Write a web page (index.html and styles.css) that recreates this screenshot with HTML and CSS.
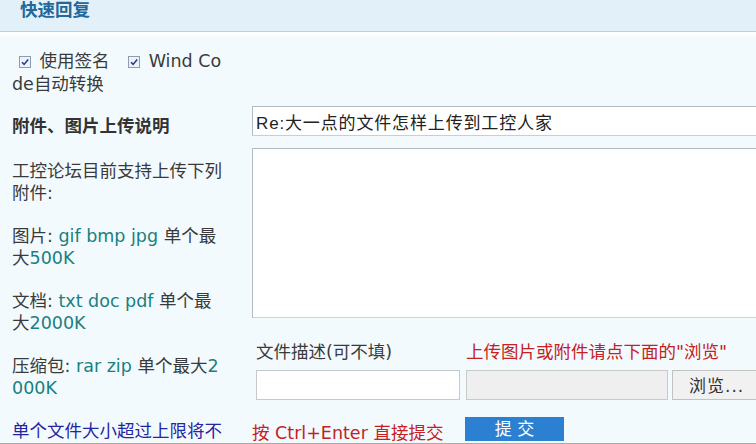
FILE: index.html
```html
<!DOCTYPE html>
<html lang="zh-CN">

<head>
  <meta charset="UTF-8">
  <meta name="viewport" content="width=device-width, initial-scale=1.0">
  <title>快速回复</title>
  <link rel="stylesheet" href="styles.css">
</head>

<body>
  <div class="reply-box">
    <div class="reply-head">快速回复</div>

    <div class="reply-body">
      <!-- Left: options and upload notes -->
      <div class="reply-side">
        <div class="options">
          <label class="opt"><span class="check"><svg width="12" height="12" viewBox="0 0 12 12"><rect x="0.5" y="0.5" width="11" height="11" fill="#eef1f6" stroke="#8e9cb2"/><path d="M3 6.2l2.1 2.2L9.2 3.4" fill="none" stroke="#2b3d92" stroke-width="1.6"/></svg></span> 使用签名</label>
          <label class="opt"><span class="check"><svg width="12" height="12" viewBox="0 0 12 12"><rect x="0.5" y="0.5" width="11" height="11" fill="#eef1f6" stroke="#8e9cb2"/><path d="M3 6.2l2.1 2.2L9.2 3.4" fill="none" stroke="#2b3d92" stroke-width="1.6"/></svg></span> Wind Code自动转换</label>
        </div>

        <h4>附件、图片上传说明</h4>
        <p>工控论坛目前支持上传下列附件:</p>
        <p>图片: <span class="ext">gif bmp jpg</span> 单个最大<span class="ext">500K</span></p>
        <p>文档: <span class="ext">txt doc pdf</span> 单个最大<span class="ext">2000K</span></p>
        <p>压缩包: <span class="ext">rar zip</span> 单个最大<span class="ext">2000K</span></p>
        <p class="notice">单个文件大小超过上限将不</p>
      </div>

      <!-- Right: the form -->
      <form class="reply-main">
        <input class="subject" type="text" name="subject" value="Re:大一点的文件怎样上传到工控人家">
        <textarea class="content" name="content"></textarea>

        <div class="upload-labels">
          <span class="desc-label">文件描述(可不填)</span>
          <span class="hint">上传图片或附件请点下面的"浏览"</span>
        </div>
        <div class="upload-fields">
          <input class="desc" type="text" name="desc">
          <span class="file-path"></span>
          <button type="button" class="browse">浏览...</button>
        </div>

        <div class="submit-row">
          <span class="hint submit-hint">按 Ctrl+Enter 直接提交</span>
          <button type="submit" class="submit">提 交</button>
        </div>
      </form>
    </div>
  </div>
</body>

</html>
```

FILE: styles.css
```css
html,
body {
  margin: 0;
  padding: 0;
  overflow: hidden;
}

body {
  font-family: "DejaVu Sans", "Noto Sans CJK SC", sans-serif;
  font-size: 17.5px;
  color: #3a3a3a;
  background-color: #f3fafe;
}

.reply-box {
  width: 800px;
  height: 444px;
  box-sizing: border-box;
  border-bottom: 1px solid #a9a9a9;
  overflow: hidden;
}

.reply-head {
  height: 31px;
  padding-left: 20px;
  line-height: 20px;
  font-weight: bold;
  color: #22689a;
  background-color: #e1f0f9;
  border-bottom: 1px solid #b8d2e2;
}

.reply-body {
  display: grid;
  grid-template-columns: 240px 1fr;
  column-gap: 12px;
  background: linear-gradient(#ffffff, #f3fafe 6px);
}

/* left column */
.reply-side {
  padding: 18px 0 0 12px;
  width: 217px;
  line-height: 22.5px;
  word-break: break-all;
}

.options {
  margin-bottom: 20px;
}

.opt {
  margin-right: 6px;
}

.check {
  display: inline-block;
  width: 12px;
  height: 12px;
  margin: 0 3px 0 7px;
  vertical-align: -1px;
}

.check svg {
  display: block;
}

.reply-side h4 {
  margin: 0 0 22px;
  font-size: 17.5px;
  color: #333;
}

.reply-side p {
  margin: 0 0 20px;
}

.ext {
  color: #19807f;
}

.notice {
  color: #2525a2;
}

/* right column */
.reply-main {
  padding-top: 74px;
  margin: 0;
}

.subject {
  display: block;
  box-sizing: border-box;
  width: 540px;
  height: 30px;
  margin: 0;
  padding: 0 3px;
  font-family: "Liberation Sans", "Noto Sans CJK SC", sans-serif;
  font-size: 17px;
  letter-spacing: 0.85px;
  color: #222;
  background: #fff;
  border: 1px solid #c8cfd3;
  border-top-color: #b4bcc1;
  border-left-color: #b4bcc1;
}

.content {
  display: block;
  box-sizing: border-box;
  width: 540px;
  height: 170px;
  margin: 12px 0 0;
  background: #fff;
  border: 1px solid #cdd3d6;
  border-top-color: #b4bcc1;
  border-left-color: #b4bcc1;
  resize: none;
}

.upload-labels {
  display: flex;
  margin-top: 23px;
  padding-left: 4px;
  line-height: 22.5px;
}

.desc-label {
  width: 210px;
}

.hint {
  color: #c4211f;
}

.upload-fields {
  display: flex;
  margin-top: 6px;
  padding-left: 4px;
  height: 30px;
}

.desc {
  box-sizing: border-box;
  width: 204px;
  height: 30px;
  margin: 0;
  background: #fff;
  border: 1px solid #c4c9cc;
}

.file-path {
  box-sizing: border-box;
  width: 202px;
  height: 30px;
  margin-left: 6px;
  background: #efefef;
  border: 1px solid #c9c9c9;
}

.browse {
  box-sizing: border-box;
  width: 100px;
  height: 30px;
  margin-left: 4px;
  padding: 0 0 0 16px;
  text-align: left;
  font-family: "DejaVu Sans", "Noto Sans CJK SC", sans-serif;
  font-size: 17px;
  letter-spacing: 1px;
  color: #333;
  background: #f1f1f1;
  border: 1px solid #c2c2c2;
  border-radius: 0;
}

.submit-row {
  display: flex;
  align-items: flex-start;
  margin-top: 17px;
}

.submit-hint {
  width: 213px;
  padding-top: 5px;
  line-height: 22.5px;
}

.submit {
  width: 99px;
  height: 24px;
  padding: 0;
  font-family: "DejaVu Sans", "Noto Sans CJK SC", sans-serif;
  font-size: 17px;
  line-height: 22px;
  color: #fff;
  background-color: #2c80d2;
  border: none;
  border-radius: 0;
}
```
